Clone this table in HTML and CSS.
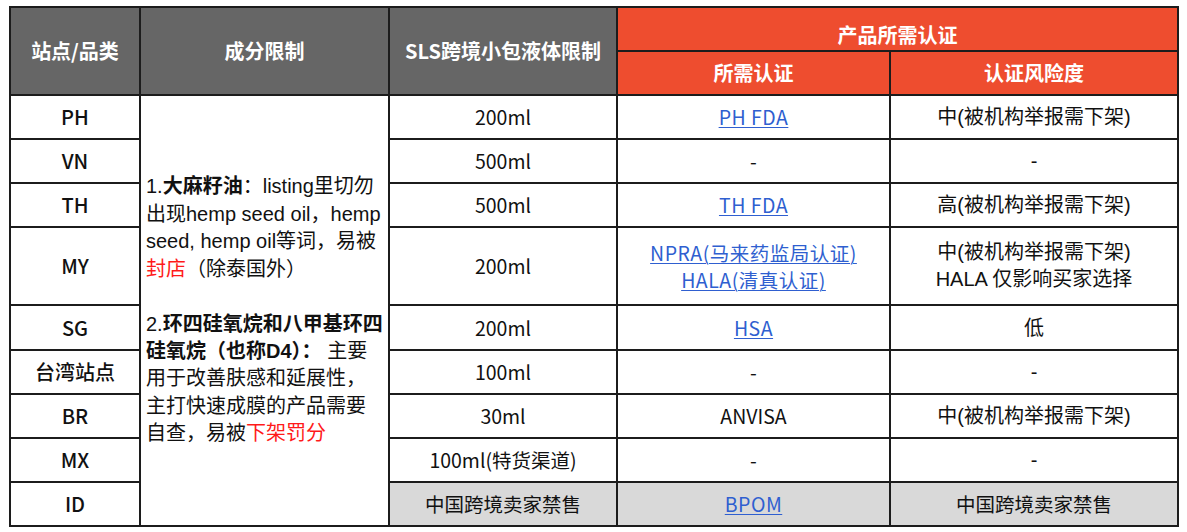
FILE: index.html
```html
<!DOCTYPE html>
<html lang="zh">
<head>
<meta charset="utf-8">
<link rel="stylesheet" href="styles.css">
</head>
<body>
<div class="page">
  <div class="sheet">
    <div class="cell hd gray span-r2">站点/品类</div>
    <div class="cell hd gray span-r2">成分限制</div>
    <div class="cell hd gray span-r2">SLS跨境小包液体限制</div>
    <div class="cell hd orange span-c2 top">产品所需认证</div>
    <div class="cell hd orange">所需认证</div>
    <div class="cell hd orange">认证风险度</div>

    <div class="cell site">PH</div>
    <div class="cell note">
      <div class="note-text">1.<b>大麻籽油</b>：listing里切勿<br>出现hemp seed oil，hemp<br>seed, hemp oil等词，易被<br><span class="red">封店</span>（除泰国外）<br><br>2.<b>环四硅氧烷和八甲基环四<br>硅氧烷（也称D4）：</b> 主要<br>用于改善肤感和延展性，<br>主打快速成膜的产品需要<br>自查，易被<span class="red">下架罚分</span></div>
    </div>
    <div class="cell body">200ml</div>
    <div class="cell body"><a class="link" href="#">PH FDA</a></div>
    <div class="cell risk">中(被机构举报需下架)</div>

    <div class="cell site">VN</div>
    <div class="cell body">500ml</div>
    <div class="cell body">-</div>
    <div class="cell risk">-</div>

    <div class="cell site">TH</div>
    <div class="cell body">500ml</div>
    <div class="cell body"><a class="link" href="#">TH FDA</a></div>
    <div class="cell risk">高(被机构举报需下架)</div>

    <div class="cell site">MY</div>
    <div class="cell body">200ml</div>
    <div class="cell body stack"><a class="link" href="#">NPRA(马来药监局认证)</a><a class="link" href="#">HALA(清真认证)</a></div>
    <div class="cell risk stack"><span>中(被机构举报需下架)</span><span>HALA 仅影响买家选择</span></div>

    <div class="cell site">SG</div>
    <div class="cell body">200ml</div>
    <div class="cell body"><a class="link" href="#">HSA</a></div>
    <div class="cell risk">低</div>

    <div class="cell site">台湾站点</div>
    <div class="cell body">100ml</div>
    <div class="cell body">-</div>
    <div class="cell risk">-</div>

    <div class="cell site">BR</div>
    <div class="cell body">30ml</div>
    <div class="cell body">ANVISA</div>
    <div class="cell risk">中(被机构举报需下架)</div>

    <div class="cell site">MX</div>
    <div class="cell body">100ml(特货渠道)</div>
    <div class="cell body">-</div>
    <div class="cell risk">-</div>

    <div class="cell site">ID</div>
    <div class="cell body shade">中国跨境卖家禁售</div>
    <div class="cell body shade"><a class="link" href="#">BPOM</a></div>
    <div class="cell body shade">中国跨境卖家禁售</div>
  </div>
</div>
</body>
</html>
```

FILE: styles.css
```css
html, body {
  margin: 0;
  padding: 0;
  background: #ffffff;
}

.page {
  padding: 6px 0 0 9px;
}

.sheet {
  display: grid;
  width: 1170px;
  box-sizing: border-box;
  grid-template-columns: 128px 247px 226px 271px 286px;
  grid-template-rows: 42px 42px 42px 42px 42px 76px 43px 42px 42px 42px 42px;
  gap: 2px;
  padding: 2px;
  background: #1c1c1c;
  font-family: "Noto Sans CJK SC", "Noto Sans", sans-serif;
  font-size: 20px;
  color: #111111;
}

.cell {
  background: #ffffff;
  display: flex;
  align-items: center;
  justify-content: center;
  text-align: center;
  overflow: hidden;
  line-height: 26px;
}

.span-r2 {
  grid-row: span 2;
}

.span-c2 {
  grid-column: span 2;
}

.hd {
  color: #ffffff;
  font-weight: 700;
}

.hd.top {
  align-items: flex-end;
  padding-bottom: 2px;
}

.gray {
  background: #666666;
}

.orange {
  background: #ee4d2f;
}

.site {
  font-weight: 500;
}

.body {
  font-size: 19.5px;
}

.note {
  grid-row: span 9;
  justify-content: flex-start;
  text-align: left;
  padding: 0 0 0 5px;
  font-family: "Liberation Sans", "Noto Sans CJK SC", sans-serif;
  font-size: 20px;
  line-height: 27.4px;
}

.note-text {
  white-space: nowrap;
}

.note b {
  font-weight: 700;
}

.red {
  color: #ff1a1a;
}

.risk {
  font-family: "Liberation Sans", "Noto Sans CJK SC", sans-serif;
  font-size: 20px;
}

.stack {
  flex-direction: column;
  line-height: 27px;
}

.link {
  color: #2f5fd0;
  text-decoration: underline;
  text-underline-offset: 2px;
  text-decoration-thickness: 1px;
  letter-spacing: 0.5px;
}

.shade {
  background: #d9d9d9;
}
```
